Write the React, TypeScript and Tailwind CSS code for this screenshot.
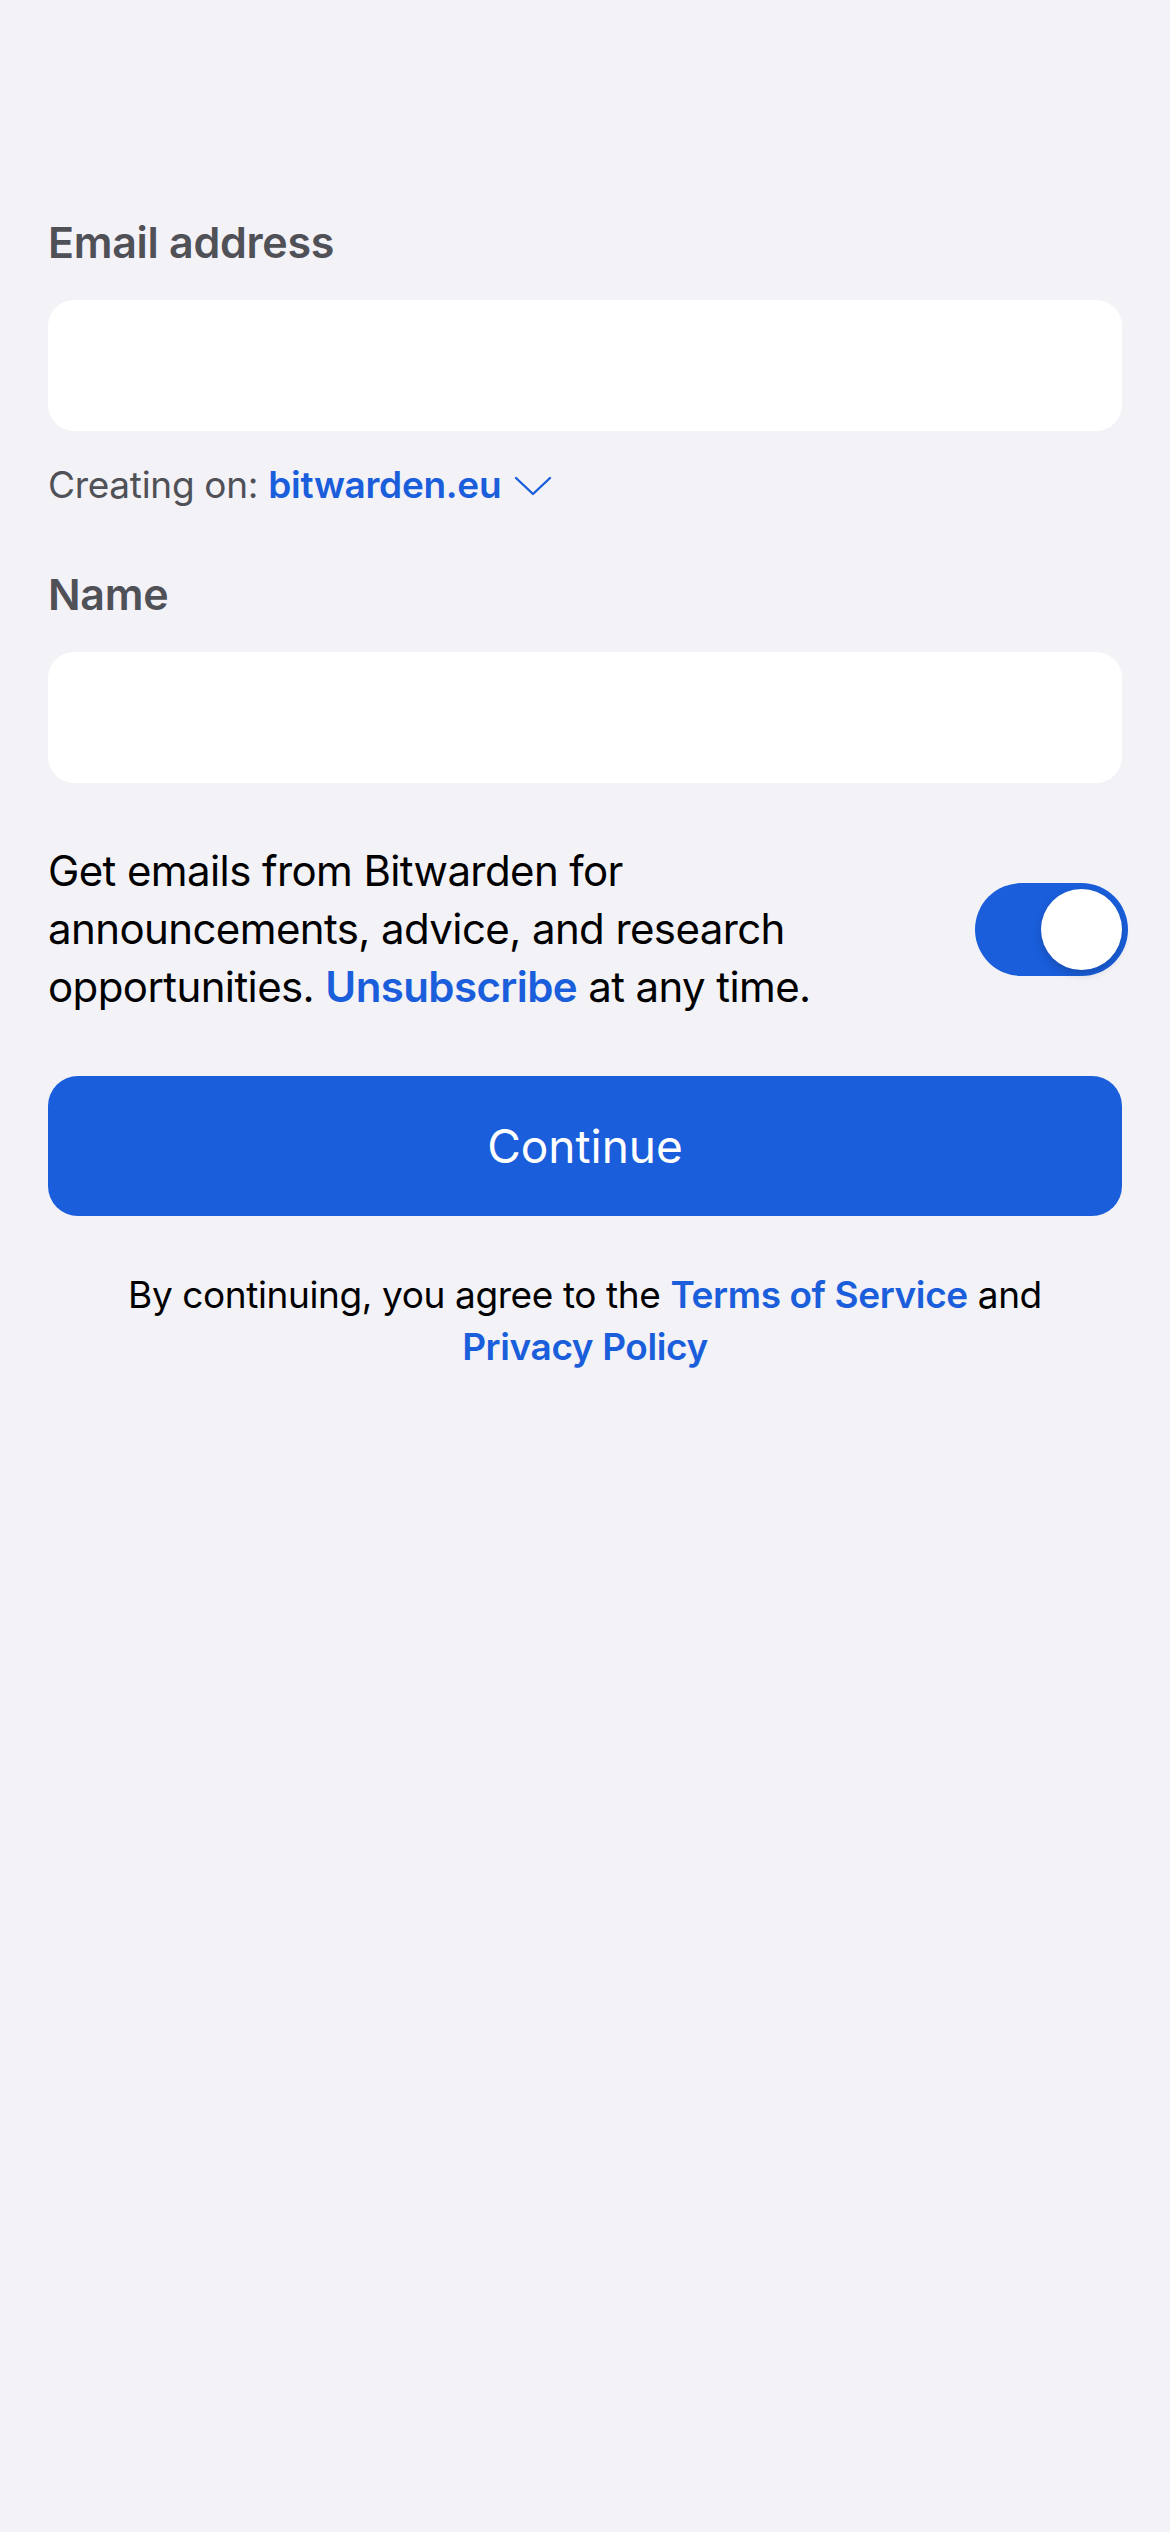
import React from "react";

export default function App() {
  return (
    <div
      className="min-h-[2532px] w-[1170px] bg-[#f2f2f7] px-[48px]"
      style={{ fontFamily: "Inter, 'Noto Sans', sans-serif" }}
    >
      <div className="pt-[214px] flex flex-col">
        <label className="text-[43px] leading-[56px] font-semibold text-[#505057] tracking-[-0.3px]">
          Email address
        </label>
        <div className="mt-[30px] h-[131px] rounded-[26px] bg-white" />
        <div className="mt-[30px] flex items-center text-[37px] leading-[48px] tracking-[-0.3px] text-[#505057]">
          <span>Creating on:&nbsp;</span>
          <span className="font-semibold text-[#1a5edb]">bitwarden.eu</span>
          <svg
            className="ml-[13px] mt-[2px]"
            width="38"
            height="22"
            viewBox="0 0 38 22"
            fill="none"
            stroke="#1a5edb"
            strokeWidth="2.4"
            strokeLinecap="round"
            strokeLinejoin="round"
          >
            <path d="M2 3 L19 19 L36 3" />
          </svg>
        </div>

        <label className="mt-[57px] text-[43px] leading-[56px] font-semibold text-[#505057] tracking-[-0.3px]">
          Name
        </label>
        <div className="mt-[30px] h-[131px] rounded-[26px] bg-white" />

        <div className="mt-[59px] flex items-center justify-between">
          <p className="text-[42px] leading-[58px] tracking-[-0.6px] text-black">
            Get emails from Bitwarden for
            <br />
            announcements, advice, and research
            <br />
            opportunities.{" "}
            <span className="font-semibold text-[#1a5edb]">Unsubscribe</span> at
            any time.
          </p>
          <div className="relative h-[93px] w-[153px] shrink-0 rounded-full bg-[#1a5edb] mr-[-6px]">
            <div className="absolute right-[6px] top-[6px] h-[81px] w-[81px] rounded-full bg-white shadow-[0_4px_10px_rgba(0,0,0,0.18)]" />
          </div>
        </div>

        <button className="mt-[60px] h-[140px] w-full rounded-[30px] bg-[#1a5edb] text-[46px] text-white">
          Continue
        </button>

        <p className="mt-[53px] text-center text-[37px] leading-[52px] tracking-[-0.4px] text-black">
          By continuing, you agree to the{" "}
          <span className="font-semibold text-[#1a5edb]">Terms of Service</span> and
          <br />
          <span className="font-semibold text-[#1a5edb]">Privacy Policy</span>
        </p>
      </div>
    </div>
  );
}
